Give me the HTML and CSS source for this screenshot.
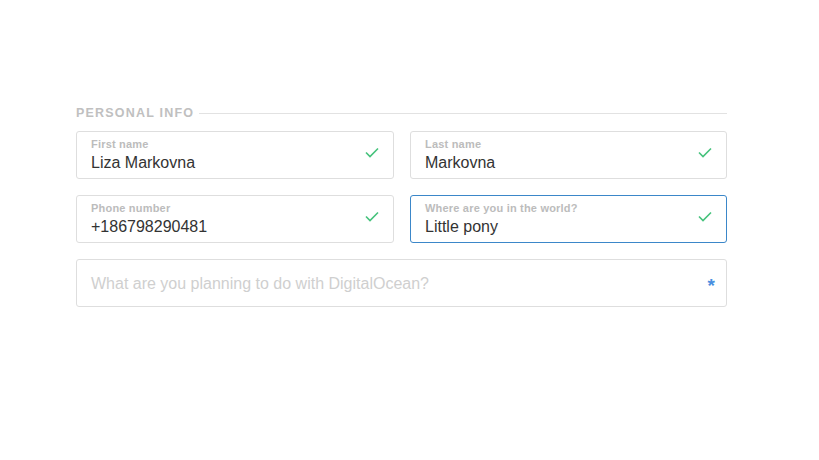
FILE: index.html
```html
<!DOCTYPE html>
<html>
<head>
<meta charset="utf-8">
<link rel="stylesheet" href="styles.css">
</head>
<body>
<div class="page">
  <section class="form">
    <div class="legend"><span class="legend-text">PERSONAL INFO</span><span class="legend-line"></span></div>
    <div class="grid">
      <div class="field">
        <div class="field-body">
          <div class="label">First name</div>
          <div class="value">Liza Markovna</div>
        </div>
        <svg class="check" width="14" height="11" viewBox="0 0 14 11"><path d="M1 5.5 L5 9.5 L13 1.5" fill="none" stroke="#45c27c" stroke-width="1.6"/></svg>
      </div>
      <div class="field">
        <div class="field-body">
          <div class="label">Last name</div>
          <div class="value">Markovna</div>
        </div>
        <svg class="check" width="14" height="11" viewBox="0 0 14 11"><path d="M1 5.5 L5 9.5 L13 1.5" fill="none" stroke="#45c27c" stroke-width="1.6"/></svg>
      </div>
      <div class="field">
        <div class="field-body">
          <div class="label">Phone number</div>
          <div class="value">+186798290481</div>
        </div>
        <svg class="check" width="14" height="11" viewBox="0 0 14 11"><path d="M1 5.5 L5 9.5 L13 1.5" fill="none" stroke="#45c27c" stroke-width="1.6"/></svg>
      </div>
      <div class="field focused">
        <div class="field-body">
          <div class="label">Where are you in the world?</div>
          <div class="value">Little pony</div>
        </div>
        <svg class="check" width="14" height="11" viewBox="0 0 14 11"><path d="M1 5.5 L5 9.5 L13 1.5" fill="none" stroke="#45c27c" stroke-width="1.6"/></svg>
      </div>
      <div class="field wide">
        <div class="placeholder">What are you planning to do with DigitalOcean?</div>
        <span class="required">*</span>
      </div>
    </div>
  </section>
</div>
</body>
</html>
```
FILE: styles.css
```css
html, body {
  margin: 0;
  padding: 0;
  background: #fff;
}
body {
  font-family: "Liberation Sans", Arial, sans-serif;
  width: 819px;
  height: 460px;
  overflow: hidden;
}
.page {
  padding: 106px 92px 0 76px;
}
.form {
  width: 651px;
}
.legend {
  display: flex;
  align-items: center;
  gap: 5px;
  height: 14px;
  margin-bottom: 11px;
}
.legend-text {
  font-size: 12.5px;
  font-weight: bold;
  letter-spacing: 1.2px;
  color: #c0c0c0;
  white-space: nowrap;
}
.legend-line {
  flex: 1;
  height: 1px;
  background: #e2e2e2;
}
.grid {
  display: grid;
  grid-template-columns: 318px 317px;
  column-gap: 16px;
  row-gap: 16px;
}
.field {
  height: 46px;
  border: 1px solid #dedede;
  border-radius: 3px;
  display: flex;
  align-items: center;
  padding: 0 14px 0 14px;
  box-sizing: content-box;
}
.field.focused {
  border-color: #3b87c9;
}
.field-body {
  flex: 1;
  padding-top: 0;
}
.label {
  font-size: 11px;
  font-weight: bold;
  color: #bcbcbc;
  line-height: 13px;
  letter-spacing: 0.2px;
}
.value {
  font-size: 16px;
  color: #333;
  line-height: 19px;
  margin-top: 2px;
}
.check {
  display: block;
  margin-right: 0;
  margin-top: -6px;
}
.wide {
  grid-column: 1 / span 2;
}
.placeholder {
  flex: 1;
  font-size: 16px;
  color: #cfcfcf;
  padding-top: 2px;
}
.required {
  color: #4a8fe0;
  font-size: 19px;
  font-weight: bold;
  margin-top: 6px;
  margin-right: -3px;
}
```
